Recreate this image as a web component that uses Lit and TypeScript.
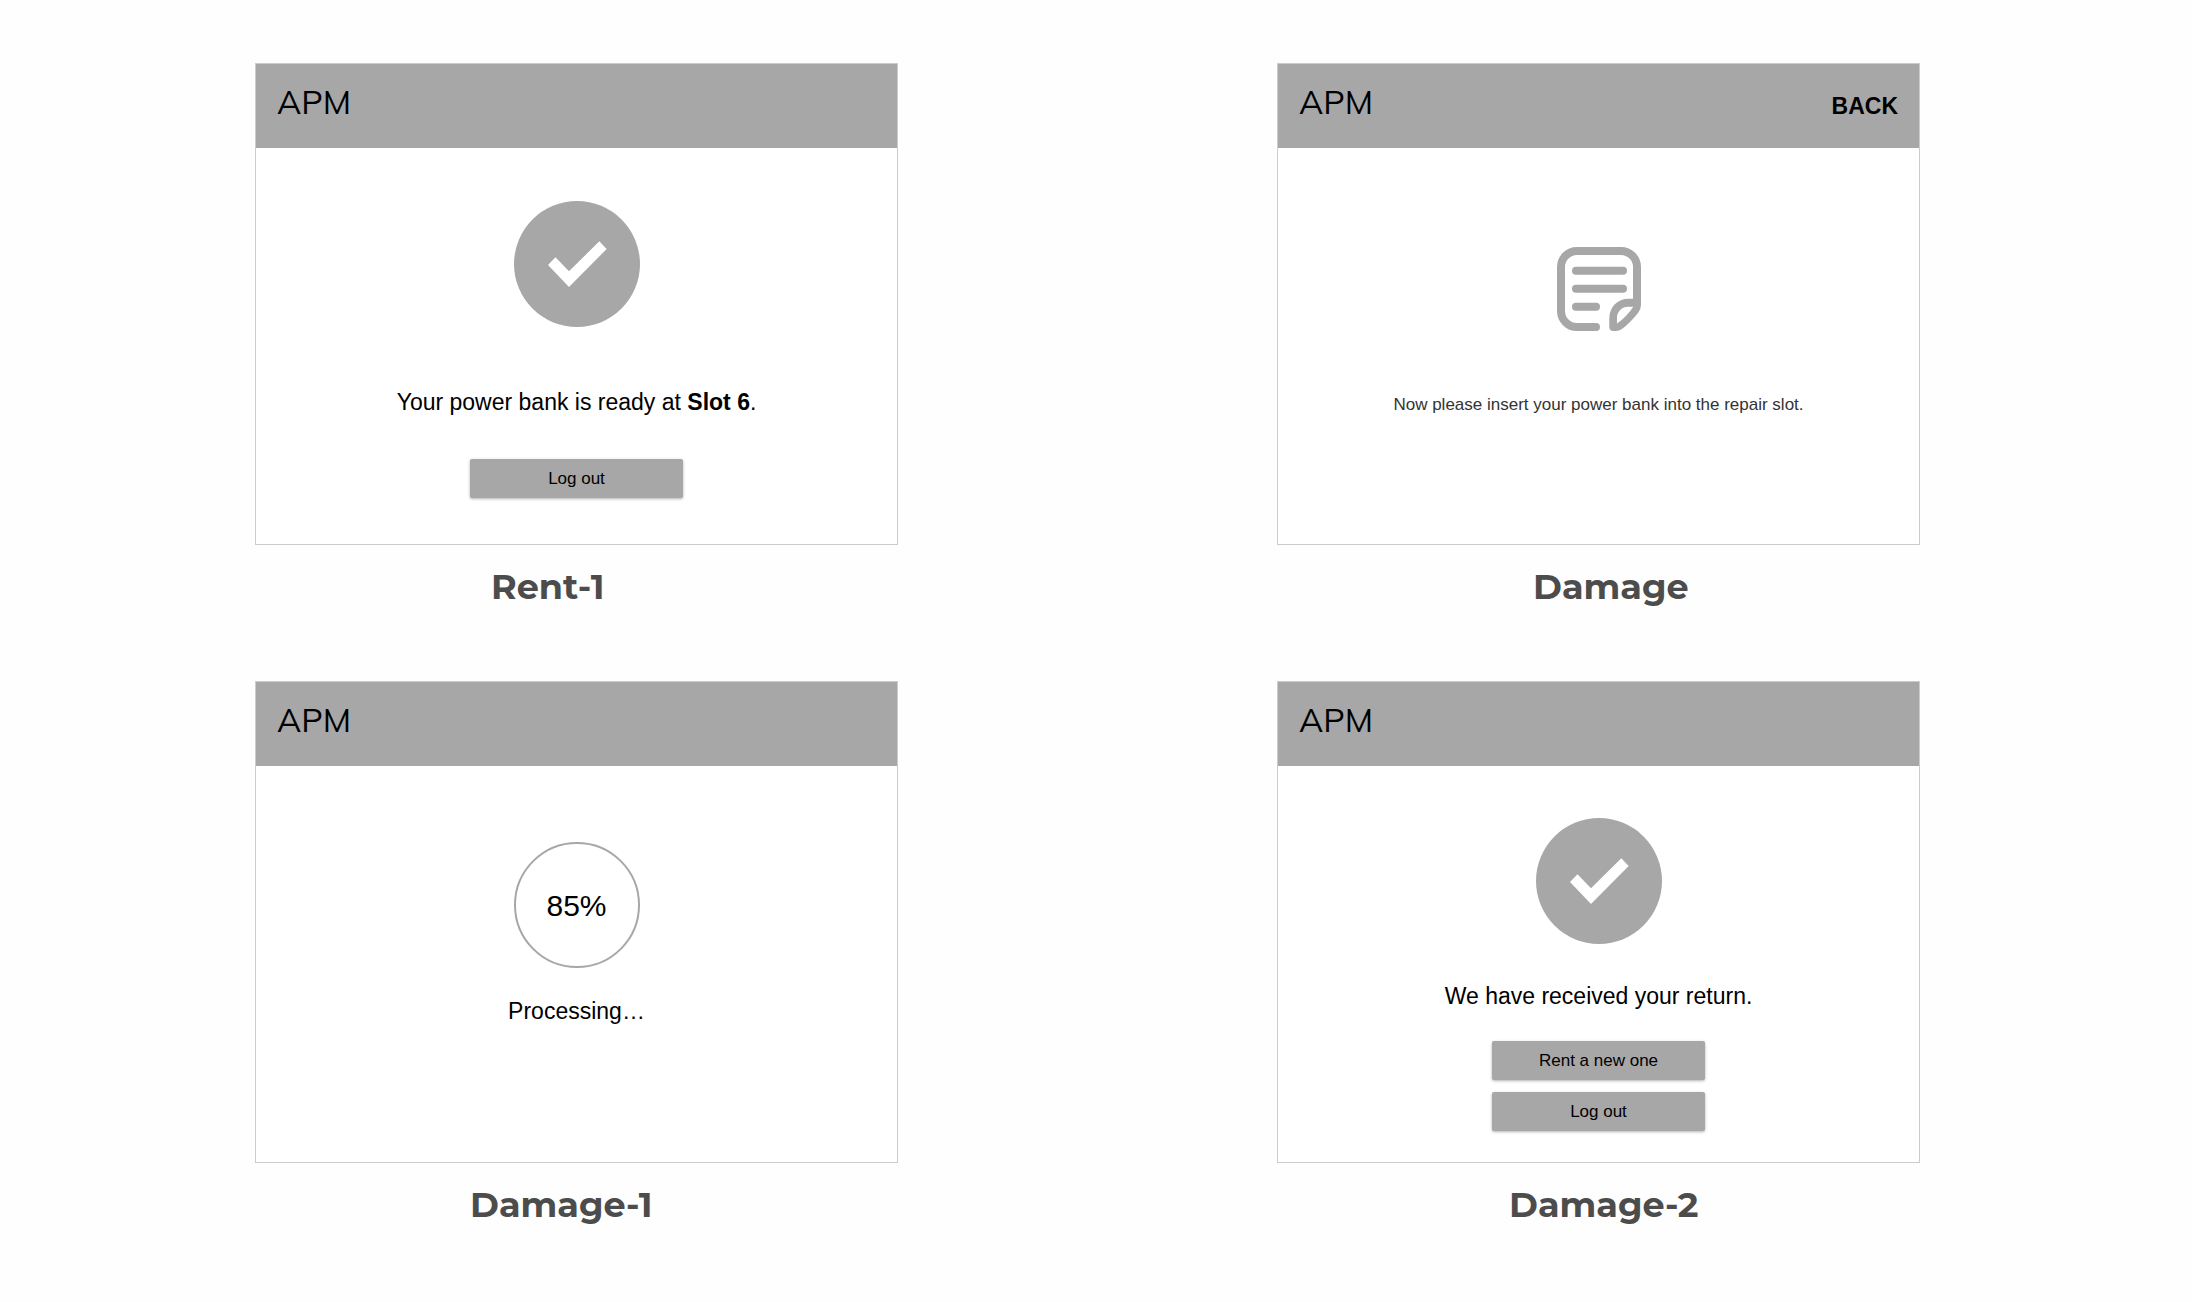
import { LitElement, html, css, svg, nothing, type TemplateResult } from "lit";
import { customElement, property } from "lit/decorators.js";

type Visual = "check" | "note" | "progress";

interface Screen {
  title: string;
  /** Distance of the frame label from the frame's left edge on the board. */
  labelStart: number;
  kind: "ready" | "insert" | "processing" | "received";
  visual: Visual;
  message: TemplateResult;
  back?: boolean;
  actions: string[];
}

const SCREENS: Screen[] = [
  {
    title: "Rent-1",
    labelStart: 236,
    kind: "ready",
    visual: "check",
    message: html`Your power bank is ready at <strong>Slot 6</strong>.`,
    actions: ["Log out"],
  },
  {
    title: "Damage",
    labelStart: 256,
    kind: "insert",
    visual: "note",
    message: html`Now please insert your power bank into the repair slot.`,
    back: true,
    actions: [],
  },
  {
    title: "Damage-1",
    labelStart: 215,
    kind: "processing",
    visual: "progress",
    message: html`Processing…`,
    actions: [],
  },
  {
    title: "Damage-2",
    labelStart: 232,
    kind: "received",
    visual: "check",
    message: html`We have received your return.`,
    actions: ["Rent a new one", "Log out"],
  },
];

const checkIcon = html`
  <svg class="check" viewBox="0 0 126 126" aria-hidden="true">
    ${svg`
      <circle cx="63" cy="63" r="63" fill="#a7a7a7" />
      <path d="M34 64 41.5 56.3 55 70.3 85.3 40.3 92.7 48 55 86Z" fill="#fff" />
    `}
  </svg>
`;

const noteIcon = html`
  <svg class="note" viewBox="0 0 84 84" aria-hidden="true">
    ${svg`
      <g fill="none" stroke="#a7a7a7" stroke-width="8" stroke-linecap="round" stroke-linejoin="round">
        <path d="M39 80H20A16 16 0 0 1 4 64V20A16 16 0 0 1 20 4H64A16 16 0 0 1 80 20V55" />
        <path d="M19 23.7H66M19 41.7H66M19 59.7H39" />
      </g>
      <path fill="#a7a7a7" fill-rule="evenodd"
        d="M84 52V58Q84 62 81 66Q73 76 65 82Q62 84 59 84H56.5Q52.3 84 52.3 79.5V71A19 19 0 0 1 71.3 51.7H84ZM76.3 59.7H71A11 11 0 0 0 60 70.7V76.5Q70 69.5 76.3 59.7Z" />
    `}
  </svg>
`;

@customElement("kiosk-screen")
export class KioskScreen extends LitElement {
  @property({ attribute: false }) screen!: Screen;

  static styles = css`
    :host {
      display: block;
      font-family: "Liberation Sans", Arial, Helvetica, sans-serif;
      color: #000;
    }
    .frame {
      box-sizing: border-box;
      min-height: 482px;
      border: 1px solid #ccc;
      background: #fff;
    }
    .bar {
      display: flex;
      justify-content: space-between;
      align-items: baseline;
      box-sizing: border-box;
      height: 84px;
      padding: 17px 21px 0;
      background: #a7a7a7;
    }
    .brand {
      font-family: Mulish, Muli, Inter, "Open Sans", sans-serif;
      font-size: 33px;
      font-weight: 400;
      line-height: 42px;
    }
    .back {
      padding: 0;
      border: 0;
      background: none;
      color: inherit;
      font: bold 23px/28px "Liberation Sans", Arial, sans-serif;
      cursor: pointer;
    }
    .body {
      display: flex;
      flex-direction: column;
      align-items: center;
    }
    .check,
    .ring {
      display: block;
      width: 126px;
      height: 126px;
    }
    .note {
      display: block;
      width: 84px;
      height: 84px;
    }
    .ring {
      display: grid;
      place-items: center;
      box-sizing: border-box;
      padding-top: 2px;
      border: 2px solid #a7a7a7;
      border-radius: 50%;
      font-size: 30px;
      line-height: 36px;
    }
    .message {
      margin: 0;
      font-size: 23px;
      line-height: 28px;
      text-align: center;
    }
    .actions {
      display: flex;
      flex-direction: column;
      gap: 12px;
    }
    .action {
      width: 213px;
      height: 39px;
      padding: 1px 0 0;
      border: 0;
      border-radius: 2px;
      background: #a7a7a7;
      box-shadow: 0 1px 3px rgba(0, 0, 0, 0.3);
      color: #000;
      font: 17px/20px "Liberation Sans", Arial, sans-serif;
      cursor: pointer;
    }
    .ready {
      padding-top: 53px;
    }
    .ready .message {
      padding: 61px 0 43px;
    }
    .insert {
      padding-top: 99px;
    }
    .insert .message {
      padding-top: 60px;
      color: #333;
      font-size: 17px;
    }
    .processing {
      padding-top: 76px;
    }
    .processing .message {
      padding-top: 29px;
    }
    .received {
      padding-top: 52px;
    }
    .received .message {
      padding: 38px 0 31px;
    }
  `;

  private renderVisual() {
    switch (this.screen.visual) {
      case "check":
        return checkIcon;
      case "note":
        return noteIcon;
      case "progress":
        return html`<div class="ring">85%</div>`;
    }
  }

  render() {
    const s = this.screen;
    return html`
      <section class="frame">
        <header class="bar">
          <span class="brand">APM</span>
          ${s.back ? html`<button class="back" type="button">BACK</button>` : nothing}
        </header>
        <div class="body ${s.kind}">
          ${this.renderVisual()}
          <p class="message">${s.message}</p>
          ${s.actions.length
            ? html`<div class="actions">
                ${s.actions.map((a) => html`<button class="action" type="button">${a}</button>`)}
              </div>`
            : nothing}
        </div>
      </section>
    `;
  }
}

@customElement("app-root")
export class AppRoot extends LitElement {
  static styles = css`
    :host {
      display: block;
      box-sizing: border-box;
      min-height: 100vh;
      background: #fefefe;
    }
    .board {
      display: grid;
      grid-template-columns: 1fr 1fr;
      column-gap: 379px;
      row-gap: 72px;
      padding: 63px 272px 60px 255px;
    }
    .label {
      margin: 0;
      padding-top: 20px;
      color: #4c4c4c;
      font: bold 35px/44px Montserrat, Inter, "Open Sans", sans-serif;
    }
  `;

  render() {
    return html`
      <main class="board">
        ${SCREENS.map(
          (s) => html`
            <article>
              <kiosk-screen .screen=${s}></kiosk-screen>
              <h2 class="label" style="margin-left: ${s.labelStart}px">${s.title}</h2>
            </article>
          `,
        )}
      </main>
    `;
  }
}
